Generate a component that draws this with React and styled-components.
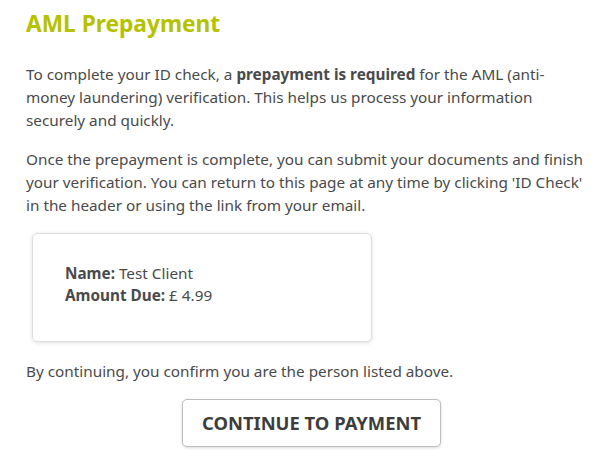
import React from "react";
import styled, { createGlobalStyle } from "styled-components";

const Global = createGlobalStyle`
  html, body { margin: 0; padding: 0; background: #fff; }
  body { font-family: "Noto Sans", "Open Sans", sans-serif; color: #4a4a4a; }
`;

const Page = styled.main`
  padding: 8px 22px 20px 26px;
  width: 610px;
  box-sizing: border-box;
`;

const Title = styled.h1`
  margin: 0 0 23px 0;
  font-size: 22.7px;
  line-height: 32px;
  font-weight: 700;
  color: #b4c200;
`;

const Para = styled.p`
  margin: 0 0 16px 0;
  font-size: 15.3px;
  line-height: 23px;
`;

const Card = styled.section`
  margin: 15px 0 18px 6px;
  width: 340px;
  height: 109px;
  box-sizing: border-box;
  border: 1px solid #dedede;
  border-radius: 5px;
  box-shadow: 0 1px 4px rgba(0, 0, 0, 0.12);
  padding: 28px 32px;
  display: flex;
  flex-direction: column;
`;

const Line = styled.div`
  font-size: 15.3px;
  line-height: 22px;
  b { font-weight: 700; }
`;

const Actions = styled.div`
  display: flex;
  justify-content: center;
  padding-left: 9px;
  margin-top: 16px;
`;

const Button = styled.button`
  width: 259px;
  height: 48px;
  padding: 0 0 2px 0;
  background: #fff;
  border: 1px solid #bdbdbd;
  border-radius: 5px;
  box-shadow: 0 1px 3px rgba(0, 0, 0, 0.15);
  font-family: "Noto Sans", "Open Sans", sans-serif;
  font-weight: 700;
  font-size: 18.4px;
  color: #3d3d3d;
  cursor: pointer;
`;

export default function App() {
  return (
    <>
      <Global />
      <Page>
        <Title>AML Prepayment</Title>
        <Para>
          To complete your ID check, a <b>prepayment is required</b> for the AML (anti-money laundering) verification. This helps us process your information securely and quickly.
        </Para>
        <Para>
          Once the prepayment is complete, you can submit your documents and finish your verification. You can return to this page at any time by clicking 'ID Check' in the header or using the link from your email.
        </Para>
        <Card>
          <Line><b>Name:</b> Test Client</Line>
          <Line><b>Amount Due:</b> £ 4.99</Line>
        </Card>
        <Para>By continuing, you confirm you are the person listed above.</Para>
        <Actions>
          <Button>CONTINUE TO PAYMENT</Button>
        </Actions>
      </Page>
    </>
  );
}
